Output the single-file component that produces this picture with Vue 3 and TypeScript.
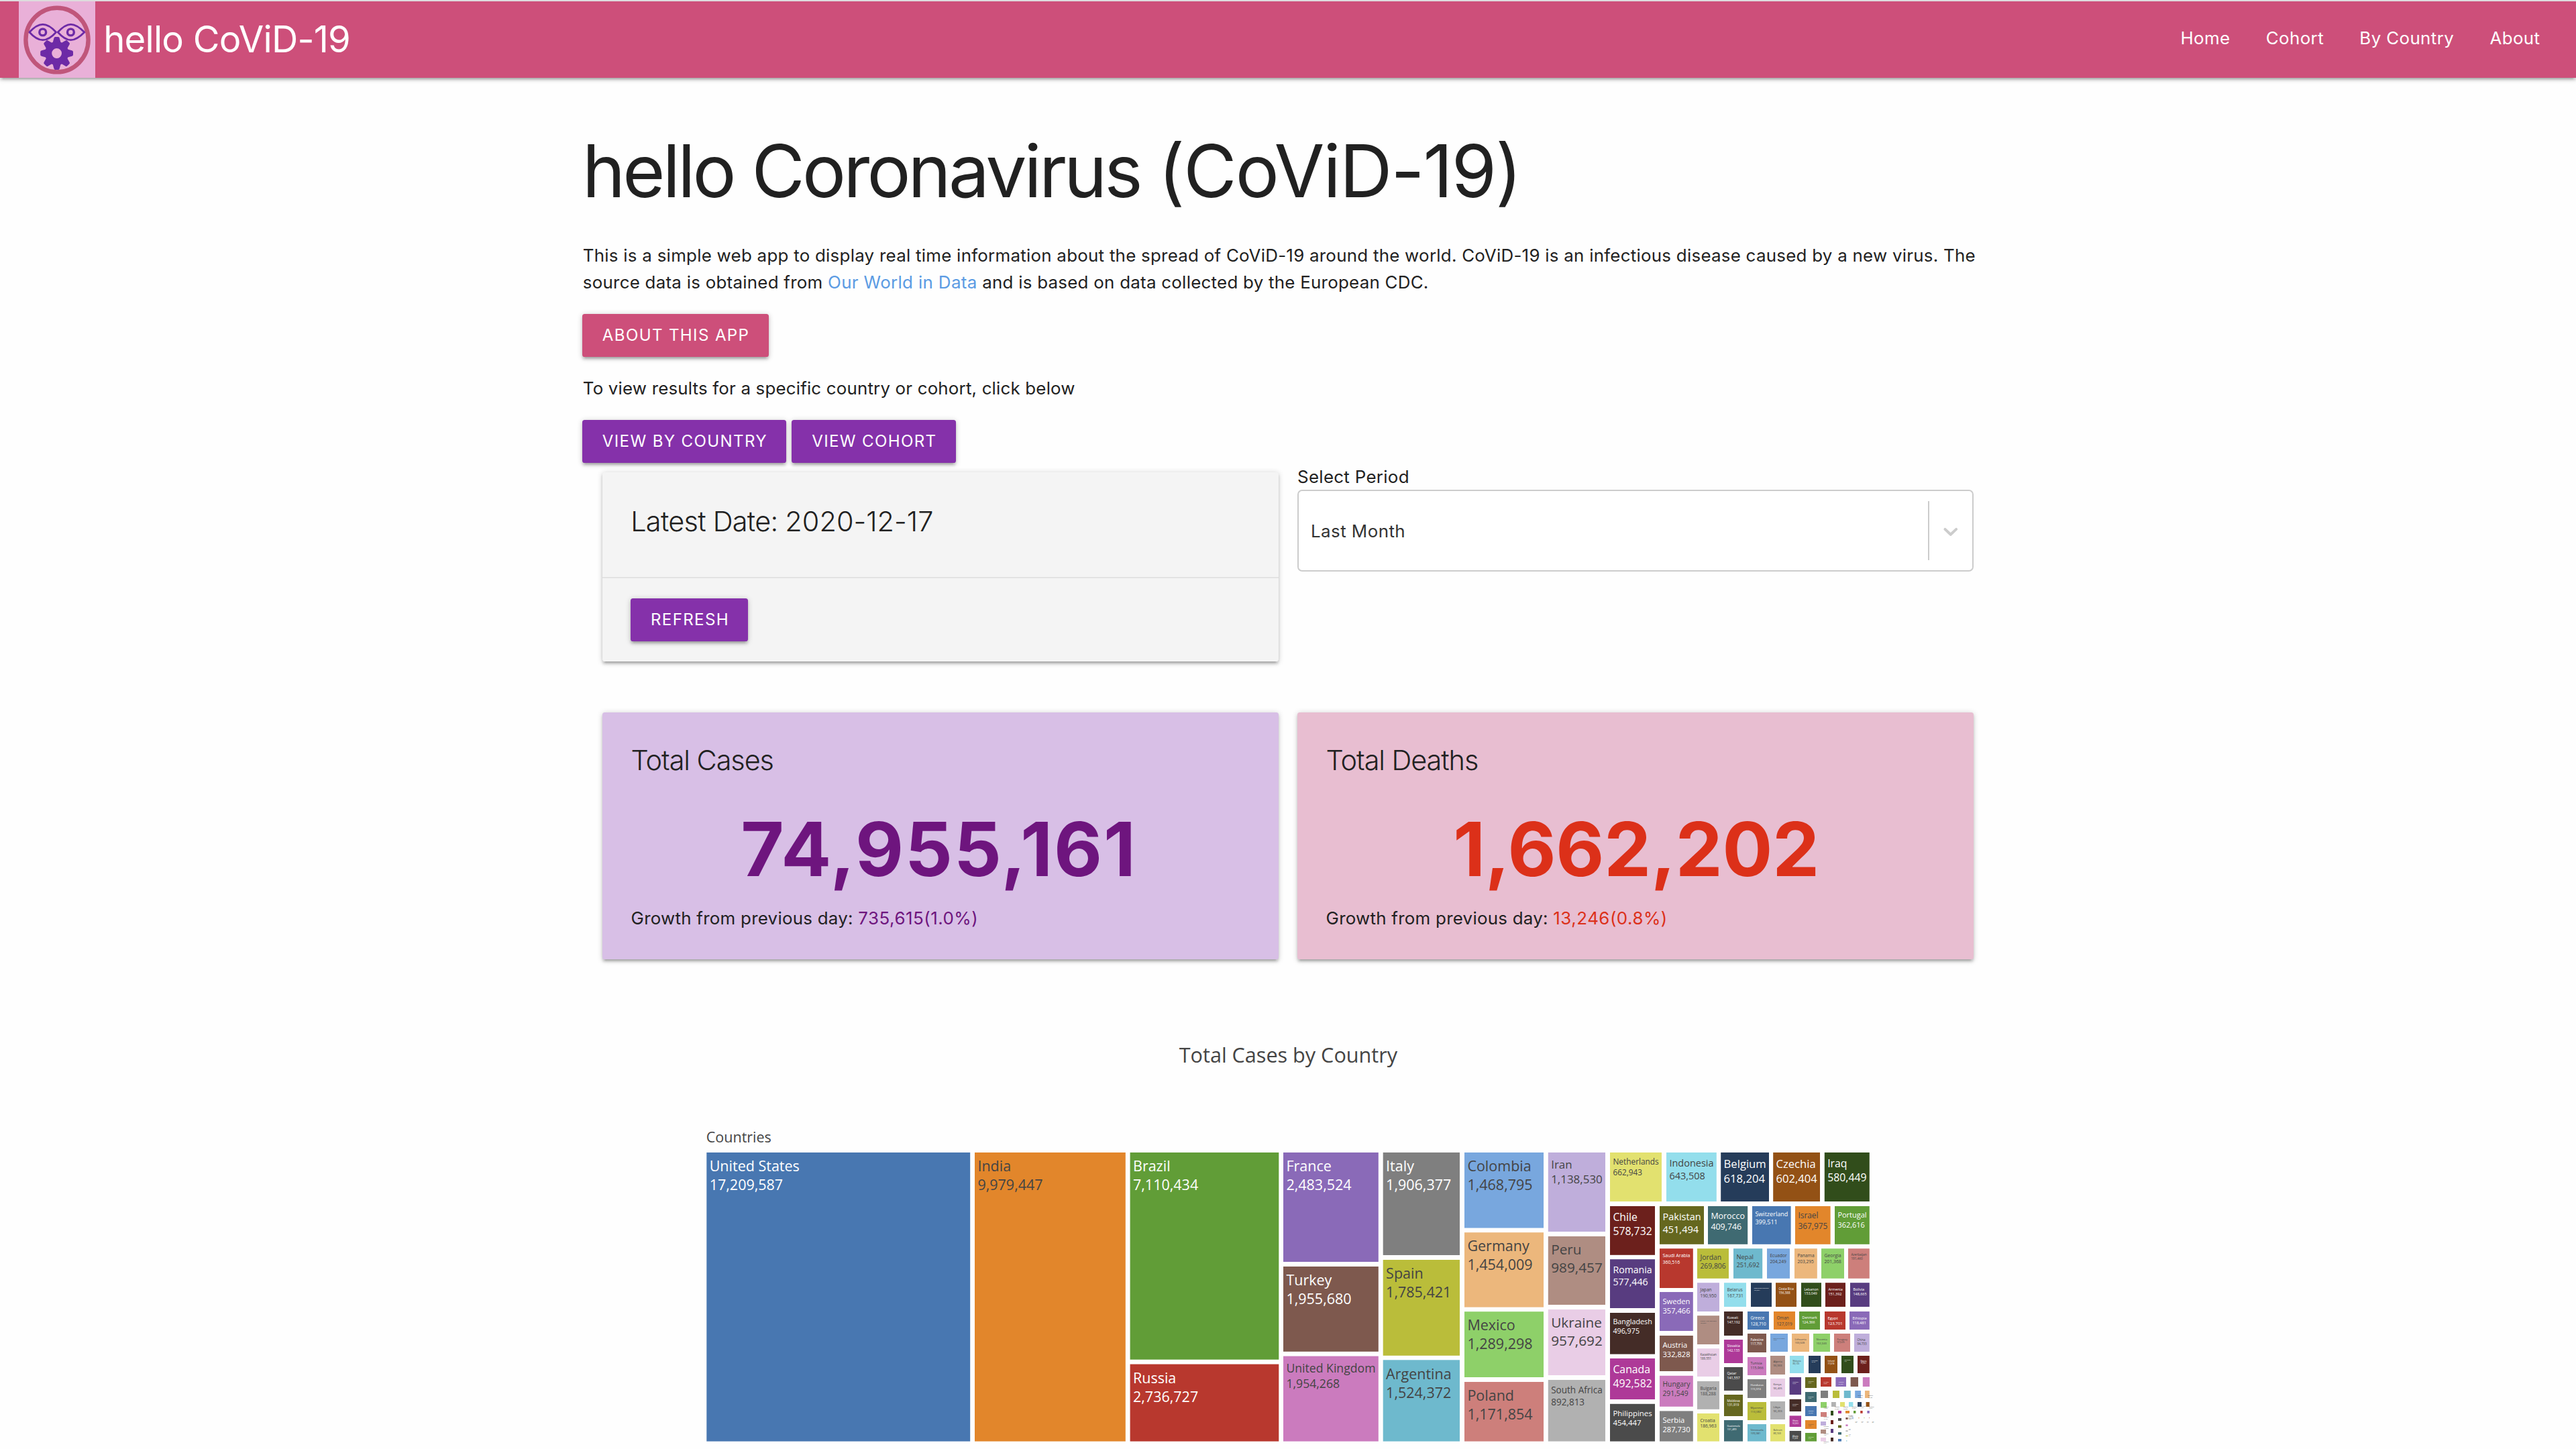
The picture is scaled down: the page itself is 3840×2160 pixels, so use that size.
<script setup lang="ts">
interface Stat {
  key: string
  title: string
  total: string
  growth: string
}

interface TreeNode {
  name: string
  value: string
  x: number
  y: number
  w: number
  h: number
  fill: string
  ink: string
  size: number
}

const navLinks = ['Home', 'Cohort', 'By Country', 'About']

const stats: Stat[] = [
  { key: 'cases', title: 'Total Cases', total: '74,955,161', growth: '735,615(1.0%)' },
  { key: 'deaths', title: 'Total Deaths', total: '1,662,202', growth: '13,246(0.8%)' },
]

const palette = [
  '#4877b1', '#e2862b', '#619d37', '#b8382e', '#8a6ab8', '#7e594e', '#cb7bbe', '#7f7f7f', '#babd3a', '#6eb9cd',
  '#78a7de', '#ecb77c', '#8ed069', '#cd7f7b', '#bfaedb', '#af8d82', '#e9cde6', '#b1b1b1', '#e2e16f', '#93deec',
  '#253c5a', '#935115', '#314d1b', '#6c201c', '#583c80', '#442c27', '#ae3998', '#4b4b4b', '#65671f', '#3f6a72',
]
const lightInk = new Set([0, 2, 3, 4, 5, 7, 20, 21, 22, 23, 24, 25, 26, 27, 28, 29])

// name, value, left, top, right, bottom; ranked by number of cases
const countries: [string, string, number, number, number, number][] = [
  ['United States', '17,209,587', 1053.3, 1718, 1446.2, 2148.6],
  ['India', '9,979,447', 1453, 1718, 1677.8, 2148.6],
  ['Brazil', '7,110,434', 1684.6, 1718, 1906.3, 2026.7],
  ['Russia', '2,736,727', 1684.6, 2033.6, 1906.3, 2148.6],
  ['France', '2,483,524', 1913, 1718, 2054.8, 1881],
  ['Turkey', '1,955,680', 1913, 1888, 2054.8, 2014.8],
  ['United Kingdom', '1,954,268', 1913, 2021.6, 2054.8, 2148.6],
  ['Italy', '1,906,377', 2061.7, 1718, 2176, 1871],
  ['Spain', '1,785,421', 2061.7, 1878, 2176, 2020.8],
  ['Argentina', '1,524,372', 2061.7, 2027.3, 2176, 2148.6],
  ['Colombia', '1,468,795', 2183, 1718, 2301, 1830.5],
  ['Germany', '1,454,009', 2183, 1837.2, 2301, 1948.6],
  ['Mexico', '1,289,298', 2183, 1955.2, 2301, 2053],
  ['Poland', '1,171,854', 2183, 2060, 2301, 2148.6],
  ['Iran', '1,138,530', 2307.8, 1718, 2393, 1836],
  ['Peru', '989,457', 2307.8, 1843, 2393, 1945],
  ['Ukraine', '957,692', 2307.8, 1952, 2393, 2050],
  ['South Africa', '892,813', 2307.8, 2057, 2393, 2148.6],
  ['Netherlands', '662,943', 2400, 1718, 2477, 1791],
  ['Indonesia', '643,508', 2484, 1718, 2558.8, 1791],
  ['Belgium', '618,204', 2565.2, 1718, 2637, 1791],
  ['Czechia', '602,404', 2643.2, 1718, 2713, 1791],
  ['Iraq', '580,449', 2719.8, 1718, 2786.8, 1791],
  ['Chile', '578,732', 2400, 1798, 2467, 1870.8],
  ['Romania', '577,446', 2400, 1877.2, 2467, 1950],
  ['Bangladesh', '496,975', 2400, 1957, 2467, 2018.6],
  ['Canada', '492,582', 2400, 2025, 2467, 2086],
  ['Philippines', '454,447', 2400, 2092.8, 2467, 2148.6],
  ['Pakistan', '451,494', 2474, 1798, 2540, 1854.8],
  ['Morocco', '409,746', 2546, 1798, 2605.2, 1854.8],
  ['Switzerland', '399,511', 2612, 1798, 2669.6, 1854.8],
  ['Israel', '367,975', 2676, 1798, 2728.6, 1854.8],
  ['Portugal', '362,616', 2735, 1798, 2786.8, 1854.8],
  ['Saudi Arabia', '360,516', 2474, 1861.2, 2523.8, 1920],
  ['Sweden', '357,466', 2474, 1926, 2523.8, 1984],
  ['Austria', '332,828', 2474, 1991, 2523.8, 2044],
  ['Hungary', '291,549', 2474, 2050.8, 2523.8, 2096.8],
  ['Serbia', '287,730', 2474, 2103.4, 2523.8, 2148.6],
  ['Jordan', '269,806', 2530, 1861.2, 2577, 1905.8],
  ['Nepal', '251,692', 2584, 1861.2, 2627.2, 1905.8],
  ['Ecuador', '204,249', 2634, 1861.2, 2668, 1905.8],
  ['Panama', '203,295', 2675, 1861.2, 2708.8, 1905.8],
  ['Georgia', '201,368', 2715, 1861.2, 2749, 1905.8],
  ['Azerbaijan', '191,460', 2755, 1861.2, 2786.8, 1905.8],
  ['Japan', '190,950', 2530, 1912.2, 2563, 1955],
  ['United Arab Emirates', '189,866', 2530, 1961.2, 2563, 2004],
  ['Kazakhstan', '189,551', 2530, 2010.2, 2563, 2052],
  ['Bulgaria', '188,288', 2530, 2059, 2563, 2100.8],
  ['Croatia', '186,963', 2530, 2107, 2563, 2148.6],
  ['Belarus', '167,731', 2570, 1912.2, 2603, 1948],
  ['Dominican Republic', '157,894', 2610, 1912.2, 2641, 1948],
  ['Costa Rica', '156,388', 2647, 1912.2, 2678, 1948],
  ['Lebanon', '153,049', 2685, 1912.2, 2715, 1948],
  ['Armenia', '151,392', 2721, 1912.2, 2751, 1948],
  ['Bolivia', '148,665', 2758, 1912.2, 2786.8, 1948],
  ['Kuwait', '147,192', 2570, 1955, 2598, 1991],
  ['Slovakia', '142,133', 2570, 1997, 2598, 2032],
  ['Qatar', '141,557', 2570, 2038, 2598, 2073],
  ['Moldova', '131,919', 2570, 2079, 2598, 2111],
  ['Guatemala', '131,489', 2570, 2117, 2598, 2148.6],
  ['Greece', '128,710', 2605, 1955, 2637, 1982],
  ['Oman', '127,019', 2644, 1955, 2676, 1982],
  ['Denmark', '124,366', 2682, 1955, 2713, 1982],
  ['Egypt', '123,701', 2720, 1955, 2751, 1982],
  ['Ethiopia', '118,481', 2757, 1955, 2786.8, 1982],
  ['Palestine', '117,755', 2605, 1988, 2633, 2016],
  ['Tunisia', '115,966', 2605, 2023, 2633, 2050],
  ['Honduras', '115,074', 2605, 2056, 2633, 2084],
  ['Myanmar', '113,082', 2605, 2090, 2633, 2117],
  ['Venezuela', '109,081', 2605, 2123, 2633, 2148.6],
  ['Bosnia and Herzegovina', '103,281', 2639, 1988, 2665, 2015],
  ['Lithuania', '103,028', 2671, 1988, 2697, 2015],
  ['Slovenia', '102,043', 2703, 1988, 2728, 2015],
  ['Paraguay', '97,620', 2734, 1988, 2758, 2015],
  ['China', '94,733', 2764, 1988, 2786.8, 2015],
  ['Algeria', '93,933', 2639, 2021, 2661, 2049],
  ['Kenya', '93,405', 2639, 2055, 2661, 2082],
  ['Libya', '93,203', 2639, 2089, 2661, 2116],
  ['Bahrain', '89,743', 2639, 2123, 2661, 2148.6],
  ['Malaysia', '89,133', 2668, 2021, 2689, 2047],
  ['Kyrgyzstan', '78,487', 2696, 2021, 2714, 2047],
  ['Ireland', '77,678', 2720, 2021, 2739, 2047],
  ['North Macedonia', '75,597', 2745, 2021, 2763, 2047],
  ['Nigeria', '75,062', 2769, 2021, 2786.8, 2047],
  ['Uzbekistan', '75,396', 2667.6, 2053, 2685, 2079],
  ['Singapore', '58,377', 2667.6, 2085.8, 2685, 2104],
  ['Ghana', '53,653', 2667.6, 2110.4, 2685, 2127],
  ['Albania', '51,424', 2667.6, 2133, 2685, 2148.6],
  ['Afghanistan', '49,970', 2691, 2053, 2708, 2069],
  ['El Salvador', '42,397', 2691, 2075, 2708, 2090],
  ['Norway', '42,776', 2691, 2096, 2708, 2111],
  ['Luxembourg', '42,902', 2691, 2117, 2708, 2130],
  ['Montenegro', '43,159', 2691, 2136, 2708, 2148.6],
  ['Sri Lanka', '35,387', 2714, 2053, 2730, 2067],
  ['Finland', '31,870', 2736.4, 2053, 2752, 2067],
  ['Uganda', '28,733', 2758.6, 2053, 2770, 2067],
  ['Australia', '28,059', 2776.8, 2053, 2787, 2067],
  ['Latvia', '28,194', 2714, 2073, 2725, 2084],
  ['Cameroon', '25,472', 2732, 2073, 2742, 2084],
  ['Sudan', '22,265', 2748.8, 2073, 2758.8, 2084],
  ['Estonia', '19,857', 2765.2, 2073, 2774, 2084],
  ['Zambia', '18,428', 2780, 2073, 2786.8, 2084],
  ['Namibia', '17,890', 2714, 2090, 2723, 2098.6],
  ['Senegal', '17,451', 2714, 2105, 2723, 2112],
  ['Cyprus', '17,052', 2714, 2119, 2722, 2125],
  ['Madagascar', '17,587', 2714, 2131, 2722, 2137],
  ['Mozambique', '17,143', 2714, 2143, 2722, 2148.6],
  ['Angola', '16,362', 2730, 2090, 2736.8, 2097],
  ['Kosovo', '16,005', 2743, 2090, 2750, 2097],
  ['Maldives', '13,465', 2756, 2090, 2762.4, 2097],
  ['Mauritania', '11,892', 2769, 2090, 2775, 2097],
  ['Tajikistan', '12,777', 2781.6, 2090, 2786.8, 2097],
  ['', '', 2729, 2103, 2733, 2110],
  ['', '', 2729, 2117, 2733, 2123],
  ['', '', 2729, 2130, 2733, 2136],
  ['', '', 2729, 2143, 2733, 2148.6],
  ['', '', 2740, 2103, 2745, 2107],
  ['', '', 2740, 2114, 2745, 2118],
  ['', '', 2740, 2124.6, 2745, 2128.4],
  ['', '', 2740, 2135, 2745, 2138.6],
  ['', '', 2740, 2145, 2745, 2148.6],
  ['Cuba', '9,671', 2751, 2103, 2757, 2106.8],
  ['', '', 2763, 2103, 2766.4, 2106.8],
  ['', '', 2773.2, 2103, 2776.6, 2106.8],
  ['', '', 2783.4, 2103, 2786.8, 2106.8],
  ['', '', 2751.4, 2113, 2754.6, 2116],
  ['Niger', '2,361', 2751.4, 2123.4, 2754.6, 2126],
  ['Iceland', '5,610', 2751.4, 2132.6, 2754.6, 2133.6],
  ['', '', 2751.4, 2140, 2754.6, 2141],
  ['', '', 2752, 2147.4, 2753.4, 2148.4],
  ['Malawi', '6,080', 2761.2, 2112.8, 2762.8, 2114.4],
  ['Rwanda', '6,832', 2770.2, 2112.8, 2771.6, 2114.4],
  ['Belize', '9,511', 2778.6, 2112.8, 2779.4, 2114.2],
  ['Aruba', '5,079', 2786, 2112.8, 2786.8, 2114.2],
]

const FULL_SIZE = 21.5
const ctx = document.createElement('canvas').getContext('2d')!
ctx.font = '100px "Open Sans"'
const emWidth = (text: string) => ctx.measureText(text).width / 100

// labels shrink to the width of their tile
const nodes: TreeNode[] = countries.map(([name, value, left, top, right, bottom], i) => {
  const w = right - left
  const em = Math.max(emWidth(name), emWidth(value), 0.1)
  const tooNarrow = w >= 10 && w < 12.5
  const minWidth = w < 5 ? 3 : 7.5
  return {
    name: tooNarrow ? '' : name,
    value: tooNarrow ? '' : value,
    x: left,
    y: top,
    w,
    h: bottom - top,
    fill: palette[i % palette.length],
    ink: lightInk.has(i % palette.length) && w > 10 ? '#ffffff' : '#444444',
    size: Math.min(FULL_SIZE, Math.max(w - 8.6, minWidth) / em),
  }
})

const teeth = [0, 45, 90, 135, 180, 225, 270, 315]
</script>

<template>
  <div class="page">
    <nav class="navbar">
      <div class="brand">
        <svg class="logo" viewBox="28 2 114 114" preserveAspectRatio="none">
          <rect x="28" y="2" width="114" height="114" fill="#e9b0d8" />
          <ellipse cx="85" cy="59.6" rx="46.6" ry="47.8" fill="none" stroke="#c0567b" stroke-width="6.4" />
          <g fill="none" stroke="#6d2aa6" stroke-linejoin="round">
            <path stroke-width="2.7" d="M43.9 48 C50 41.2 56 36.3 63.8 36.3 C71.5 36.3 77.5 41.2 83.6 48 C77.5 54.8 71.5 59.7 63.8 59.7 C56 59.7 50 54.8 43.9 48Z" />
            <path stroke-width="2.7" d="M86.2 48 C92.3 41.2 98.3 36.3 105.5 36.3 C112.7 36.3 119.2 41.2 125.8 48 C119.2 54.8 112.7 59.7 105.5 59.7 C98.3 59.7 92.3 54.8 86.2 48Z" />
            <circle stroke-width="3.4" cx="63.7" cy="48" r="4.9" />
            <circle stroke-width="3.4" cx="105.4" cy="48" r="4.9" />
          </g>
          <g fill="#6d2aa6">
            <circle cx="84.6" cy="79.5" r="12.5" fill="none" stroke="#6d2aa6" stroke-width="10.2" />
            <path
              v-for="angle in teeth"
              :key="angle"
              :transform="`rotate(${angle} 84.6 79.5)`"
              d="M78.2 65 L80.4 57 Q80.7 55.1 82.4 55.1 H86.8 Q88.5 55.1 88.8 57 L91 65Z"
            />
          </g>
        </svg>
        <span class="brand-name">hello CoViD-19</span>
      </div>
      <ul class="links">
        <li v-for="link in navLinks" :key="link"><a>{{ link }}</a></li>
      </ul>
    </nav>

    <main class="container">
      <h1>hello Coronavirus <span>(CoViD-19)</span></h1>
      <p class="intro">
        This is a simple web app to display real time information about the spread of CoViD-19 around the world.
        CoViD-19 is an infectious disease caused by a new virus. The source data is obtained from
        <a>Our World in Data</a> and is based on data collected by the European CDC.
      </p>
      <div class="actions"><button class="btn pink">About this app</button></div>
      <p class="hint">To view results for a specific country or cohort, click below</p>
      <div class="actions">
        <button class="btn">View by country</button>
        <button class="btn">View cohort</button>
      </div>

      <div class="grid top-grid">
        <section class="card date-card">
          <div class="date-title">Latest Date: <span>2020-12-17</span></div>
          <div class="card-action"><button class="btn">Refresh</button></div>
        </section>
        <section class="period">
          <label>Select Period</label>
          <div class="select">
            <span class="select-value">Last Month</span>
            <span class="separator"></span>
            <span class="indicator">
              <svg viewBox="0 0 20 20" fill="#cccccc">
                <path d="M4.516 7.548c0.436-0.446 1.043-0.481 1.576 0l3.908 3.747 3.908-3.747c0.533-0.481 1.141-0.446 1.574 0 0.436 0.445 0.408 1.197 0 1.615-0.406 0.418-4.695 4.502-4.695 4.502-0.217 0.223-0.502 0.335-0.787 0.335s-0.570-0.112-0.789-0.335c0 0-4.287-4.084-4.695-4.502s-0.436-1.170 0-1.615z" />
              </svg>
            </span>
          </div>
        </section>
      </div>

      <div class="grid stat-grid">
        <section v-for="stat in stats" :key="stat.key" class="card stat" :class="stat.key">
          <div class="stat-title">{{ stat.title }}</div>
          <div class="total">{{ stat.total }}</div>
          <div class="growth">Growth from previous day: <span>{{ stat.growth }}</span></div>
        </section>
      </div>

      <svg class="chart" viewBox="868 1520 2104 640">
        <text class="chart-title" x="1920.4" y="1584" text-anchor="middle">Total Cases by Country</text>
        <text class="chart-root" x="1052.8" y="1703">Countries</text>
        <g v-for="(node, i) in nodes" :key="i">
          <rect :x="node.x" :y="node.y" :width="node.w" :height="node.h" :fill="node.fill" />
          <text v-if="node.name" :font-size="node.size" :fill="node.ink">
            <tspan :x="node.x + 4.4" :y="node.y + 5.9 + node.size * 1.04">{{ node.name }}</tspan>
            <tspan :x="node.x + 4.4" :y="node.y + 5.9 + node.size * 2.34">{{ node.value }}</tspan>
          </text>
        </g>
      </svg>
    </main>
  </div>
</template>

<style>
body {
  background: #fefefe;
  overflow: hidden;
}
</style>

<style scoped>
.page {
  box-sizing: border-box;
  width: 3840px;
  height: 2160px;
  overflow: hidden;
  border-top: 2px solid #dedbdd;
  font-family: Inter, "Liberation Sans", sans-serif;
  font-size: 25.9px;
  font-weight: 400;
  line-height: 40px;
  letter-spacing: 0.26px;
  color: #212121;
}

.navbar {
  display: flex;
  justify-content: space-between;
  height: 114px;
  padding: 0 27px 0 28px;
  background: #cd4f7a;
  color: #fff;
  box-shadow: 0 3.6px 3.6px 0 rgba(0, 0, 0, 0.14), 0 5.3px 1.8px -3.6px rgba(0, 0, 0, 0.12), 0 1.8px 8.9px 0 rgba(0, 0, 0, 0.2);
}

.brand {
  display: flex;
}

.logo {
  display: block;
  width: 114px;
  height: 114px;
}

.brand-name {
  margin-left: 12.2px;
  font-size: 54.4px;
  line-height: 112.6px;
  letter-spacing: -0.76px;
}

.links {
  display: flex;
  margin: 0;
  padding: 0;
  list-style: none;
  letter-spacing: 0.38px;
  line-height: 109.6px;
}

.links li {
  padding: 0 26.67px;
}

.container {
  width: 2104px;
  margin: 0 auto;
}

h1 {
  margin: 77px 0 44.8px;
  font-size: 108.6px;
  font-weight: 400;
  line-height: 123px;
  letter-spacing: -3.88px;
}

h1 span {
  letter-spacing: -1.85px;
}

p {
  margin: 0;
}

.intro {
  padding-left: 0.8px;
}

.intro a {
  color: #5b9be3;
  letter-spacing: 0.35px;
}

.actions {
  display: flex;
  gap: 8px;
  margin-top: 26.9px;
}

.hint {
  margin-top: 27.4px;
  padding-left: 0.8px;
  letter-spacing: 0.18px;
}

.btn {
  display: block;
  height: 64px;
  padding: 0 28.4px 0 29.8px;
  border: 0;
  border-radius: 3.6px;
  background: #8531aa;
  color: #fff;
  font-family: inherit;
  font-size: 24.1px;
  font-weight: inherit;
  line-height: 62px;
  letter-spacing: 1.35px;
  text-transform: uppercase;
  box-shadow: 0 3.6px 3.6px 0 rgba(0, 0, 0, 0.14), 0 5.3px 1.8px -3.6px rgba(0, 0, 0, 0.12), 0 1.8px 8.9px 0 rgba(0, 0, 0, 0.2);
}

.btn.pink {
  background: #cd4f7a;
}

.grid {
  display: grid;
  grid-template-columns: 1fr 1fr;
  column-gap: 28px;
  padding: 0 30px;
}

.card {
  border-radius: 3.6px;
  box-shadow: 0 3.6px 3.6px 0 rgba(0, 0, 0, 0.14), 0 5.3px 1.8px -3.6px rgba(0, 0, 0, 0.12), 0 1.8px 8.9px 0 rgba(0, 0, 0, 0.2);
}

.date-card {
  display: flex;
  flex-direction: column;
  height: 282px;
  margin-top: 14px;
  background: #f4f4f4;
}

.date-title {
  box-sizing: border-box;
  height: 156px;
  padding: 45px 42.2px 0;
  font-size: 41.4px;
  font-weight: 300;
  line-height: 56.9px;
  letter-spacing: -0.7px;
}

.date-title span {
  letter-spacing: 0.05px;
}

.card-action {
  flex: 1;
  padding: 30px 42.2px;
  border-top: 2px solid #e2e2e2;
}

.period label {
  display: block;
  padding-top: 0.6px;
  height: 39.4px;
  letter-spacing: 0.3px;
}

.select {
  box-sizing: border-box;
  display: flex;
  align-items: center;
  width: 1008px;
  height: 122px;
  border: 2px solid #ccc;
  border-radius: 7px;
  background: #fff;
  color: #333;
}

.select-value {
  flex: 1;
  padding: 1.6px 0 0 18px;
  letter-spacing: 0.45px;
}

.separator {
  width: 2px;
  height: 88px;
  background: #ccc;
}

.indicator {
  display: flex;
  padding: 1px 14.2px 0;
}

.indicator svg {
  width: 35.6px;
  height: 35.6px;
}

.stat-grid {
  margin-top: 76px;
}

.stat {
  box-sizing: border-box;
  height: 368px;
  padding: 42.7px 42.6px;
}

.stat-title {
  font-size: 41.4px;
  font-weight: 300;
  line-height: 56.9px;
  letter-spacing: -1.05px;
}

.total {
  margin: 42.5px 0 21.5px;
  font-size: 111px;
  font-weight: 700;
  line-height: 123px;
  text-align: center;
}

.growth span {
  letter-spacing: 0.5px;
}

.cases {
  background: #d8bfe6;
}

.cases .total {
  margin-right: 5px;
  letter-spacing: 1.9px;
}

.cases .total,
.cases span {
  color: #6e157e;
}

.deaths {
  background: #e8bed1;
}

.deaths .total {
  padding-left: 2px;
  letter-spacing: -0.2px;
}

.deaths .total,
.deaths span {
  color: #dc3019;
}

.chart {
  display: block;
  width: 2104px;
  height: 640px;
  margin-top: 90px;
  font-family: "Open Sans", sans-serif;
  font-weight: 400;
  letter-spacing: 0;
}

.chart-title {
  font-size: 30.6px;
  fill: #444;
}

.chart-root {
  font-size: 21.5px;
  fill: #444;
}
</style>
